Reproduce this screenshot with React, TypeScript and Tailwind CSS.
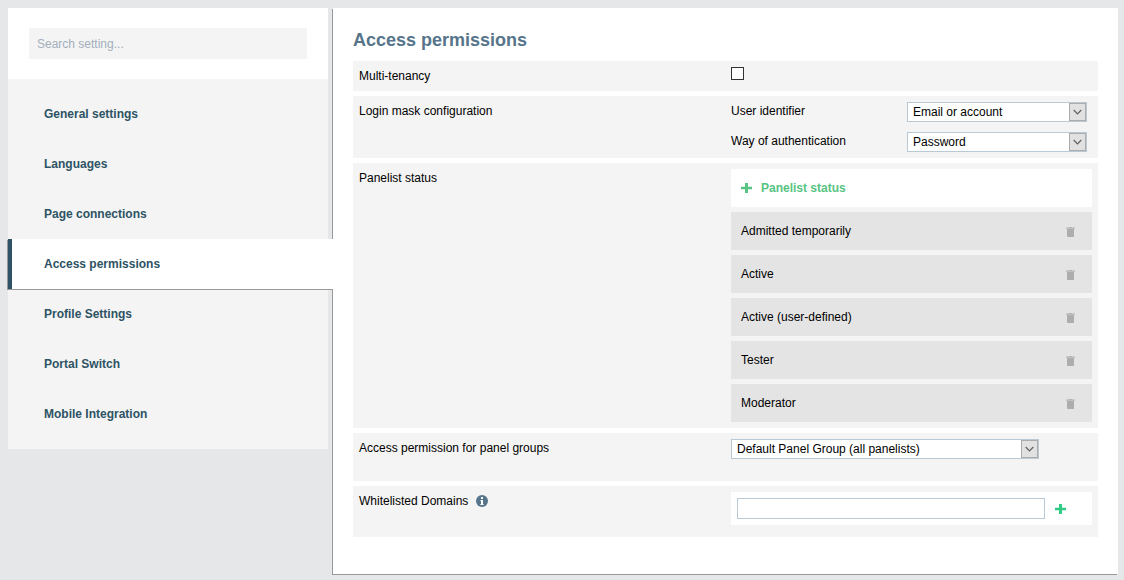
import { useState } from "react";
import type { ReactNode } from "react";

const navItems = [
  "General settings",
  "Languages",
  "Page connections",
  "Access permissions",
  "Profile Settings",
  "Portal Switch",
  "Mobile Integration",
];

const statuses = ["Admitted temporarily", "Active", "Active (user-defined)", "Tester", "Moderator"];

function PlusIcon({ className }: { className: string }) {
  return (
    <svg viewBox="0 0 11 10" className={`h-2.5 w-[11px] shrink-0 ${className}`} aria-hidden="true">
      <path d="M4 0h3v3.7h4v2.6H7V10H4V6.3H0V3.7h4z" fill="currentColor" />
    </svg>
  );
}

function TrashIcon() {
  return (
    <svg viewBox="0 0 9 10" className="h-2.5 w-[9px]" aria-hidden="true">
      <path d="M0 0.6h2.6L3.2 0h2.6L6.4 0.6H9v1.2H0z" fill="#b4b4b4" />
      <path d="M1 2h7V9.2Q8 10 7.2 10H1.8Q1 10 1 9.2z" fill="#adadad" />
    </svg>
  );
}

function InfoIcon() {
  return (
    <svg viewBox="0 0 12 12" className="size-3 shrink-0" aria-hidden="true">
      <circle cx="6" cy="6" r="6" fill="#56758a" />
      <path d="M5 2h2v2H5zM4.4 5H7V9h.6v1H4.4V9H5V6h-.6z" fill="#fff" />
    </svg>
  );
}

function SelectBox({ id, options, className }: { id: string; options: string[]; className: string }) {
  return (
    <div className={`relative ${className}`}>
      <select
        id={id}
        className="block h-5 w-full appearance-none border border-[#b9cad6] bg-white pr-5 pl-[5px] text-xs leading-[18px] text-black outline-none"
      >
        {options.map((o) => (
          <option key={o}>{o}</option>
        ))}
      </select>
      <span className="pointer-events-none absolute inset-y-px right-px flex w-[17px] items-center justify-center border border-[#acacac] bg-[#e1e1e1]">
        <svg viewBox="0 0 9 6" className="h-1.5 w-[9px]" aria-hidden="true">
          <path d="M0.7 1L4.5 4.8L8.3 1" fill="none" stroke="#606060" strokeWidth="1.2" />
        </svg>
      </span>
    </div>
  );
}

function Row({ label, className = "pb-1.5", children }: { label: ReactNode; className?: string; children: ReactNode }) {
  return (
    <div className={`grid grid-cols-[minmax(0,372fr)_minmax(0,361fr)] bg-[#f4f4f4] px-1.5 pt-1.5 ${className}`}>
      <div className="leading-[18px]">{label}</div>
      <div>{children}</div>
    </div>
  );
}

export default function App() {
  const [active, setActive] = useState("Access permissions");
  return (
    <div className="flex min-h-screen gap-[5px] bg-[#e6e7e8] pt-2 pr-1.5 pb-1.5 pl-2 font-['Liberation_Sans',Arial,sans-serif] text-xs text-black">
      <aside className="relative z-10 w-80 shrink-0 self-start">
        <div className="bg-white px-[21px] py-5">
          <input
            type="search"
            aria-label="Search setting"
            placeholder="Search setting..."
            className="block h-[31px] w-full bg-[#f4f4f4] px-2 text-xs outline-none placeholder:text-[#a3afbc]"
          />
        </div>
        <nav className="bg-[#f4f4f4] py-2.5">
          {navItems.map((item) => (
            <a
              key={item}
              href="#"
              onClick={(e) => {
                e.preventDefault();
                setActive(item);
              }}
              aria-current={item === active ? "page" : undefined}
              className={`flex h-[50px] items-center border-l-4 pl-8 font-bold text-[#2d5364] ${
                item === active ? "-mr-[5px] border-[#2d5364] bg-white shadow-[-1px_1px_0_#999]" : "border-transparent"
              }`}
            >
              {item}
            </a>
          ))}
        </nav>
      </aside>

      <main className="min-w-0 flex-1 bg-white px-5 pt-5 pb-9 shadow-[-1px_1px_0_#999]">
        <h1 className="text-lg leading-6 font-bold text-[#56758a]">Access permissions</h1>
        <div className="mt-[9px] flex flex-col gap-[5px]">
          <Row label={<label htmlFor="tenancy">Multi-tenancy</label>}>
            <input
              id="tenancy"
              type="checkbox"
              className="block size-[13px] appearance-none border border-[#333] bg-white checked:bg-[#56758a]"
            />
          </Row>

          <Row label="Login mask configuration">
            <div className="flex flex-col gap-2.5 pr-[5px]">
              <div className="flex items-start justify-between">
                <label htmlFor="identifier" className="leading-[18px]">User identifier</label>
                <SelectBox id="identifier" options={["Email or account", "Email", "Account"]} className="w-[180px]" />
              </div>
              <div className="flex items-start justify-between">
                <label htmlFor="authentication" className="leading-[18px]">Way of authentication</label>
                <SelectBox id="authentication" options={["Password", "Code"]} className="w-[180px]" />
              </div>
            </div>
          </Row>

          <Row label="Panelist status">
            <div className="flex flex-col gap-[5px]">
              <button type="button" className="flex h-[38px] items-center gap-[9px] bg-white px-2.5 font-bold text-[#58c483]">
                <PlusIcon className="text-[#58c483]" />
                Panelist status
              </button>
              <ul className="flex flex-col gap-[5px]">
                {statuses.map((s) => (
                  <li key={s} className="flex h-[38px] items-center justify-between bg-[#e4e4e4] pr-[17px] pl-2.5">
                    {s}
                    <button type="button" aria-label={`Delete ${s}`} className="pt-0.5">
                      <TrashIcon />
                    </button>
                  </li>
                ))}
              </ul>
            </div>
          </Row>

          <Row label={<label htmlFor="group">Access permission for panel groups</label>} className="pb-[22px]">
            <SelectBox id="group" options={["Default Panel Group (all panelists)"]} className="w-[308px]" />
          </Row>

          <Row
            className="pb-3"
            label={
              <div className="flex items-center gap-2">
                <label htmlFor="domain">Whitelisted Domains</label>
                <InfoIcon />
              </div>
            }
          >
            <div className="flex items-center gap-2.5 bg-white p-1.5">
              <input
                id="domain"
                type="text"
                className="h-[21px] w-[308px] min-w-0 border border-[#b9cad6] bg-white px-1 outline-none"
              />
              <button type="button" aria-label="Add domain">
                <PlusIcon className="text-[#2ecc84]" />
              </button>
            </div>
          </Row>
        </div>
      </main>
    </div>
  );
}
